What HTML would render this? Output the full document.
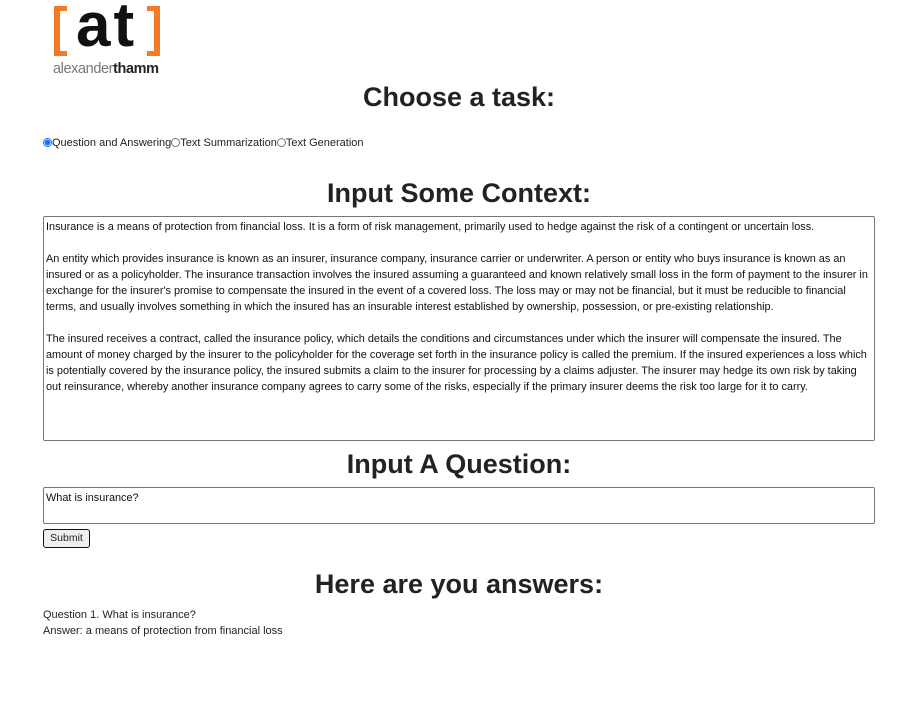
<!DOCTYPE html>
<html><head><meta charset="utf-8"><style>
body{margin:0;width:918px;height:701px;background:#fff;font-family:"Liberation Sans",sans-serif;color:#222;position:relative;overflow:hidden}
.a{position:absolute}
h1{position:absolute;left:0;width:918px;text-align:center;margin:0;font-size:27px;font-weight:bold;color:#222;line-height:34px}
.box{position:absolute;border:1px solid #767676;border-radius:2px;font-size:10.9px;line-height:16px;padding:2px 2px;box-sizing:border-box;white-space:nowrap;color:#111}
.t{font-size:11px;color:#222}
</style></head><body>
<div class="a" style="left:53px;top:2px;width:108px;height:56px">
<div class="a" style="left:1px;top:4px;width:6px;height:50px;background:#f47a2a"></div>
<div class="a" style="left:1px;top:4px;width:13px;height:5px;background:#f47a2a"></div>
<div class="a" style="left:1px;top:49px;width:13px;height:5px;background:#f47a2a"></div>
<div class="a" style="left:101px;top:4px;width:6px;height:50px;background:#f47a2a"></div>
<div class="a" style="left:94px;top:4px;width:13px;height:5px;background:#f47a2a"></div>
<div class="a" style="left:94px;top:49px;width:13px;height:5px;background:#f47a2a"></div>
<div class="a" style="left:23px;top:-11px;font-size:62px;font-weight:bold;color:#111;letter-spacing:3px;line-height:70px">at</div>
</div>
<div class="a" style="left:53px;top:61px;font-size:14.5px;color:#777;letter-spacing:-0.4px">alexander<b style="color:#222">thamm</b></div>
<h1 style="top:80px">Choose a task:</h1>
<div class="a t" style="left:43px;top:137px">
<span style="display:inline-block;width:7px;height:7px;border-radius:50%;border:1px solid #1a73e8;background:radial-gradient(#1a73e8 55%,#fff 60%);vertical-align:-1px"></span>Question and Answering<span style="display:inline-block;width:7px;height:7px;border-radius:50%;border:1px solid #777;vertical-align:-1px"></span>Text Summarization<span style="display:inline-block;width:7px;height:7px;border-radius:50%;border:1px solid #777;vertical-align:-1px"></span>Text Generation</div>
<h1 style="top:176px">Input Some Context:</h1>
<div class="box" style="left:43px;top:216px;width:832px;height:225px">Insurance is a means of protection from financial loss. It is a form of risk management, primarily used to hedge against the risk of a contingent or uncertain loss.<br><br>An entity which provides insurance is known as an insurer, insurance company, insurance carrier or underwriter. A person or entity who buys insurance is known as an<br>insured or as a policyholder. The insurance transaction involves the insured assuming a guaranteed and known relatively small loss in the form of payment to the insurer in<br>exchange for the insurer's promise to compensate the insured in the event of a covered loss. The loss may or may not be financial, but it must be reducible to financial<br>terms, and usually involves something in which the insured has an insurable interest established by ownership, possession, or pre-existing relationship.<br><br>The insured receives a contract, called the insurance policy, which details the conditions and circumstances under which the insurer will compensate the insured. The<br>amount of money charged by the insurer to the policyholder for the coverage set forth in the insurance policy is called the premium. If the insured experiences a loss which<br>is potentially covered by the insurance policy, the insured submits a claim to the insurer for processing by a claims adjuster. The insurer may hedge its own risk by taking<br>out reinsurance, whereby another insurance company agrees to carry some of the risks, especially if the primary insurer deems the risk too large for it to carry.</div>
<h1 style="top:447px">Input A Question:</h1>
<div class="box" style="left:43px;top:487px;width:832px;height:37px">What is insurance?</div>
<div class="a" style="left:43px;top:529px;width:47px;height:19px;border:1.5px solid #111;border-radius:3px;background:#efefef;font-size:10.5px;text-align:center;line-height:16px;box-sizing:border-box">Submit</div>
<h1 style="top:567px">Here are you answers:</h1>
<div class="a t" style="left:43px;top:607px;line-height:16px">Question 1. What is insurance?<br>Answer: a means of protection from financial loss</div>
</body></html>
